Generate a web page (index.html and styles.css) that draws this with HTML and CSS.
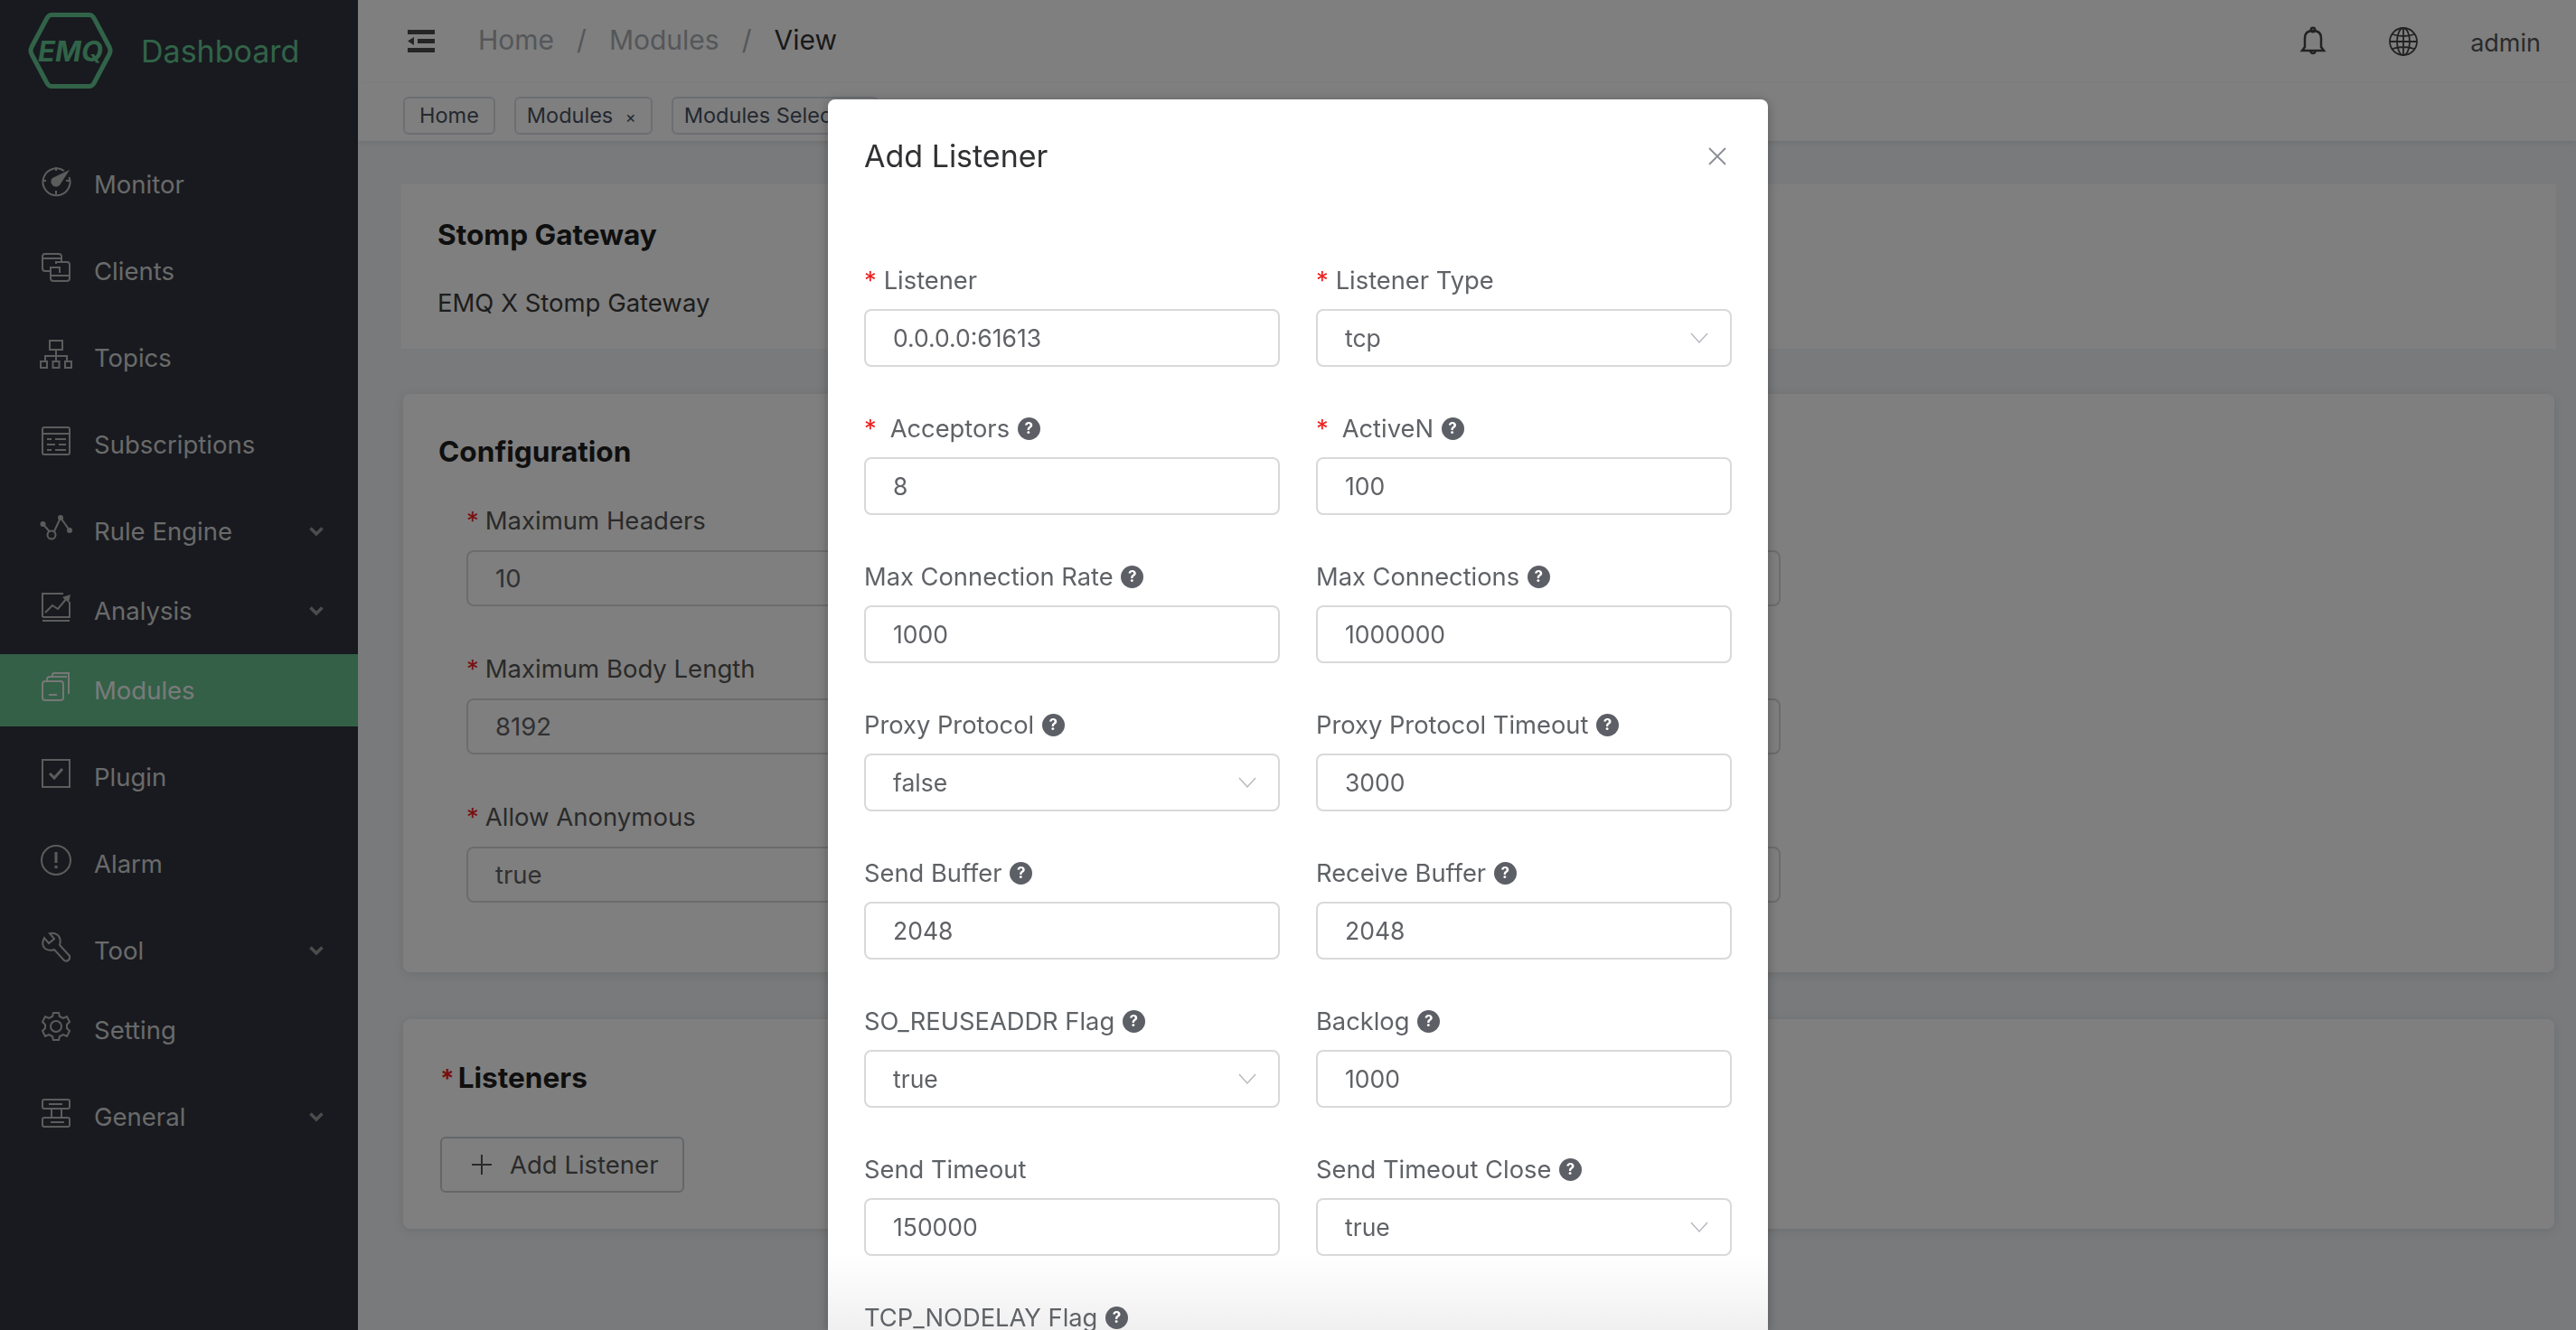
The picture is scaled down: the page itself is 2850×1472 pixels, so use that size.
FILE: index.html
```html
<!DOCTYPE html>
<html lang="en">
<head>
  <meta charset="UTF-8">
  <title>Dashboard</title>
  <link rel="stylesheet" href="styles.css">
</head>
<body>

<div class="app">
  <aside class="sidebar">
    <div class="logo">
      <div class="logo-mark">
        <svg class="logo-hex" viewBox="0 0 92 84"><path d="M25 2.5H67Q70 2.5 72 6L89 38Q91 42 89 46L72 78Q70 81.500 67 81.500H25Q22 81.500 20 78L3 46Q1 42 3 38L20 6Q22 2.500 25 2.500Z"/></svg>
        <span class="logo-emq">EMQ</span>
      </div>
      <span class="logo-name">Dashboard</span>
    </div>

    <nav class="nav">
      <a class="nav-item">
        <svg class="nav-icon" viewBox="0 0 32 32"><path d="M25 5A15 15 0 1 0 30.500 12"/><path d="M16 1V5M16 27V31M1 16H5M27 16H31"/><path class="solid" d="M31 4L20 21A5.500 5.500 0 1 1 12 13Z"/></svg>
        <span>Monitor</span>
      </a>
      <a class="nav-item">
        <svg class="nav-icon" viewBox="0 0 32 32"><path d="M10 20H4Q1 20 1 17V4Q1 1 4 1H19Q22 1 22 4V10M1 6H22"/><path d="M16 12V10H28Q31 10 31 13V28Q31 31 28 31H13Q10 31 10 28V16H20V22M10 25H31"/></svg>
        <span>Clients</span>
      </a>
      <a class="nav-item">
        <svg class="nav-icon" viewBox="0 0 32 32"><path d="M9 1H23V11H9ZM16 11V18M4 24V18H28V24M16 18V24M-1 24H6V31H-1ZM12.500 24H19.500V31H12.500ZM26 24H33V31H26Z"/></svg>
        <span>Topics</span>
      </a>
      <a class="nav-item">
        <svg class="nav-icon" viewBox="0 0 32 32"><path d="M3 1H29Q31 1 31 3V29Q31 31 29 31H3Q1 31 1 29V3Q1 1 3 1Z"/><path d="M1 8H31M6 14H11M15 14H27M6 20H15M19 20H27M6 26H11M15 26H27"/></svg>
        <span>Subscriptions</span>
      </a>
      <a class="nav-item nav-sub">
        <svg class="nav-icon" viewBox="0 0 32 32"><path d="M1.500 12L8.500 20M14 20L21 5L31 19"/><circle cx="11" cy="24" r="4.500"/><circle class="solid" cx="1.500" cy="12" r="3"/><circle class="solid" cx="21" cy="5" r="3"/><circle class="solid" cx="31" cy="19" r="3"/></svg>
        <span>Rule Engine</span>
        <svg class="chevron" viewBox="0 0 16 10"><path d="M1.500 1.500L8 8L14.500 1.500"/></svg>
      </a>
      <a class="nav-item nav-sub">
        <svg class="nav-icon" viewBox="0 0 32 32"><path d="M1 27V1H24M31 10V27H1M1 31H31"/><path d="M4 22L12 14L18 18L28 6"/><path class="solid" d="M32 2L30 11L23 5Z"/></svg>
        <span>Analysis</span>
        <svg class="chevron" viewBox="0 0 16 10"><path d="M1.500 1.500L8 8L14.500 1.500"/></svg>
      </a>
      <a class="nav-item active">
        <svg class="nav-icon" viewBox="0 0 32 32"><path d="M4 10H21Q24 10 24 13V28Q24 31 21 31H4Q1 31 1 28V13Q1 10 4 10Z"/><path d="M8 25H17M6 9V8Q6 5 9 5H28M12 4V3Q12 1 14 1H30V24"/></svg>
        <span>Modules</span>
      </a>
      <a class="nav-item">
        <svg class="nav-icon" viewBox="0 0 32 32"><path d="M1 1H31V31H1Z"/><path class="thick" d="M9 16L14 21L23 11"/></svg>
        <span>Plugin</span>
      </a>
      <a class="nav-item">
        <svg class="nav-icon" viewBox="0 0 32 32"><circle cx="16" cy="16" r="16"/><path class="thick" d="M16 7V19M16 22V25"/></svg>
        <span>Alarm</span>
      </a>
      <a class="nav-item nav-sub">
        <svg class="nav-icon" viewBox="0 0 32 32"><path d="M9 1L14 7L8 12L3 6Q-1 14 4 18Q9 21 14 19L25 31Q29 33 31 29L31 26L20 14Q22 7 18 3Q14 0 9 1Z"/></svg>
        <span>Tool</span>
        <svg class="chevron" viewBox="0 0 16 10"><path d="M1.500 1.500L8 8L14.500 1.500"/></svg>
      </a>
      <a class="nav-item">
        <svg class="nav-icon" viewBox="0 0 32 32"><circle cx="16" cy="16" r="6"/><path d="M13 1H19L20 5L24 7L28 5L31 11L28 14V18L31 21L28 27L24 25L20 27L19 31H13L12 27L8 25L4 27L1 21L4 18V14L1 11L4 5L8 7L12 5Z"/></svg>
        <span>Setting</span>
      </a>
      <a class="nav-item nav-sub">
        <svg class="nav-icon" viewBox="0 0 32 32"><path d="M3 1H29Q31 1 31 3V9Q31 11 29 11H3Q1 11 1 9V3Q1 1 3 1ZM3 21H29Q31 21 31 23V29Q31 31 29 31H3Q1 31 1 29V23Q1 21 3 21ZM11 11V21M22 11V21M8 6H23M10 26H25"/></svg>
        <span>General</span>
        <svg class="chevron" viewBox="0 0 16 10"><path d="M1.500 1.500L8 8L14.500 1.500"/></svg>
      </a>
    </nav>
  </aside>

  <main class="main">
    <header class="topbar">
      <svg class="fold-icon" viewBox="0 0 30 25"><path d="M0 0H30V5H0ZM0 20H30V25H0ZM11 10H30V15H11ZM0 12.500L7 8V17Z"/></svg>
      <div class="crumbs">
        <span>Home</span><i>/</i><span>Modules</span><i>/</i><span class="crumb-current">View</span>
      </div>
      <div class="topbar-right">
        <svg class="bell" viewBox="0 0 26 32"><path d="M1 26H25L22 22V12Q22 4 13 4Q4 4 4 12V22Z"/><circle cx="13" cy="3" r="2.200"/><path d="M10 27Q13 31 16 27"/></svg>
        <svg class="globe" viewBox="0 0 32 32"><circle cx="16" cy="16" r="15"/><ellipse cx="16" cy="16" rx="7" ry="15"/><path d="M16 1V31M1 16H31M4 8Q16 12 28 8M4 24Q16 20 28 24"/></svg>
        <span class="user">admin</span>
      </div>
    </header>
    <div class="tabs">
      <span class="tag">Home</span>
      <span class="tag">Modules <b>×</b></span>
      <span class="tag">Modules Select <b>×</b></span>
    </div>

    <section class="info-card">
      <h2>Stomp Gateway</h2>
      <p>EMQ X Stomp Gateway</p>
    </section>

    <section class="card config-card">
      <h2>Configuration</h2>
      <div class="config-grid">
        <div class="config-field">
          <label><em>*</em>Maximum Headers</label>
          <input type="text" value="10">
        </div>
        <div class="config-field">
          <label><em>*</em>Maximum Header Length</label>
          <input type="text">
        </div>
        <div class="config-field">
          <label><em>*</em>Maximum Body Length</label>
          <input type="text" value="8192">
        </div>
        <div class="config-field">
          <label><em>*</em>Default User</label>
          <input type="text">
        </div>
        <div class="config-field">
          <label><em>*</em>Allow Anonymous</label>
          <input type="text" value="true">
        </div>
        <div class="config-field">
          <label><em>*</em>Default Password</label>
          <input type="text">
        </div>
      </div>
    </section>

    <section class="card listeners-card">
      <h2><em>*</em>Listeners</h2>
      <button class="add-btn" type="button">
        <svg viewBox="0 0 22 22"><path d="M11 0V22M0 11H22"/></svg>
        Add Listener
      </button>
    </section>
  </main>
</div>

<div class="mask"></div>

<div class="modal">
  <div class="modal-head">
    <span class="modal-title">Add Listener</span>
    <svg class="modal-close" viewBox="0 0 20 20"><path d="M1 1L19 19M19 1L1 19"/></svg>
  </div>

  <form class="modal-form">
    <div class="field">
      <label><em>*</em>Listener</label>
      <input type="text" value="0.0.0.0:61613">
    </div>
    <div class="field">
      <label><em>*</em>Listener Type</label>
      <div class="select">tcp <svg viewBox="0 0 20 12"><path d="M1 1L10 11L19 1"/></svg></div>
    </div>

    <div class="field">
      <label><em class="wide">*</em>Acceptors <span class="help">?</span></label>
      <input type="text" value="8">
    </div>
    <div class="field">
      <label><em class="wide">*</em>ActiveN <span class="help">?</span></label>
      <input type="text" value="100">
    </div>

    <div class="field">
      <label>Max Connection Rate <span class="help">?</span></label>
      <input type="text" value="1000">
    </div>
    <div class="field">
      <label>Max Connections <span class="help">?</span></label>
      <input type="text" value="1000000">
    </div>

    <div class="field">
      <label>Proxy Protocol <span class="help">?</span></label>
      <div class="select">false <svg viewBox="0 0 20 12"><path d="M1 1L10 11L19 1"/></svg></div>
    </div>
    <div class="field">
      <label>Proxy Protocol Timeout <span class="help">?</span></label>
      <input type="text" value="3000">
    </div>

    <div class="field">
      <label>Send Buffer <span class="help">?</span></label>
      <input type="text" value="2048">
    </div>
    <div class="field">
      <label>Receive Buffer <span class="help">?</span></label>
      <input type="text" value="2048">
    </div>

    <div class="field">
      <label>SO_REUSEADDR Flag <span class="help">?</span></label>
      <div class="select">true <svg viewBox="0 0 20 12"><path d="M1 1L10 11L19 1"/></svg></div>
    </div>
    <div class="field">
      <label>Backlog <span class="help">?</span></label>
      <input type="text" value="1000">
    </div>

    <div class="field">
      <label>Send Timeout</label>
      <input type="text" value="150000">
    </div>
    <div class="field">
      <label>Send Timeout Close <span class="help">?</span></label>
      <div class="select">true <svg viewBox="0 0 20 12"><path d="M1 1L10 11L19 1"/></svg></div>
    </div>

    <div class="field">
      <label>TCP_NODELAY Flag <span class="help">?</span></label>
    </div>
  </form>
</div>

</body>
</html>
```

FILE: styles.css
```css
* {
  box-sizing: border-box;
}
html, body {
  height: 100%;
}
body {
  margin: 0;
  overflow: hidden;
  font-family: Inter, "Noto Sans", sans-serif;
  font-size: 27.5px;
  color: #333;
  background: #f2f4f8;
}
em {
  font-style: normal;
  color: #f01f1f;
}
svg {
  display: block;
  flex: none;
  fill: none;
  stroke: currentColor;
  overflow: visible;
}

.app {
  display: flex;
  height: 100%;
}

/* sidebar */
.sidebar {
  width: 396px;
  flex: none;
  background: #30343e;
  color: #d4d4d4;
}
.logo {
  display: flex;
  align-items: center;
  height: 112px;
  padding-left: 32px;
}
.logo-mark {
  position: relative;
  width: 92px;
  height: 84px;
  color: #62c690;
}
.logo-hex {
  width: 92px;
  height: 84px;
  stroke-width: 5;
}
.logo-emq {
  position: absolute;
  inset: 0;
  display: flex;
  align-items: center;
  justify-content: center;
  font-size: 31px;
  font-weight: 700;
  font-style: italic;
}
.logo-name {
  margin-left: 32px;
  font-size: 34px;
  color: #62c690;
}
.nav {
  padding-top: 52px;
}
.nav-item {
  display: flex;
  align-items: center;
  height: 80px;
  margin-bottom: 16px;
  padding-left: 46px;
}
.nav-sub {
  margin-bottom: 8px;
}
.nav-item.active {
  background: #66c08e;
  color: #f5f5f5;
}
.nav-icon {
  width: 32px;
  height: 32px;
  margin-right: 26px;
  margin-bottom: 8px;
  stroke-width: 2;
  color: #b8b8b8;
}
.active .nav-icon {
  color: #eee;
}
.nav-icon .solid {
  fill: currentColor;
  stroke: none;
}
.nav-icon .thick {
  stroke-width: 3;
}
.chevron {
  width: 16px;
  height: 10px;
  margin-left: auto;
  margin-right: 38px;
  stroke-width: 3.500;
  color: #999;
}

/* top bar */
.main {
  flex: 1;
  min-width: 0;
}
.topbar {
  display: flex;
  align-items: center;
  height: 92px;
  padding-left: 55px;
  background: #fff;
}
.fold-icon {
  width: 30px;
  height: 25px;
  margin-bottom: 2px;
  fill: #4a4a4a;
  stroke: none;
}
.crumbs {
  display: flex;
  align-items: center;
  margin-left: 48px;
  margin-bottom: 4px;
  font-size: 30px;
  color: #a8aeb4;
}
.crumbs i {
  margin: 0 25px;
  font-style: normal;
  font-weight: 400;
}
.crumb-current {
  color: #333;
}
.topbar-right {
  display: flex;
  align-items: center;
  margin-left: auto;
  padding-right: 39px;
  color: #555;
}
.bell {
  width: 26px;
  height: 32px;
  stroke-width: 2.500;
  color: #444;
}
.globe {
  width: 32px;
  height: 32px;
  margin-left: 71px;
  stroke-width: 1.800;
  color: #444;
}
.user {
  margin-left: 58px;
  margin-top: 4px;
  font-size: 27px;
  line-height: 32px;
}
.tabs {
  display: flex;
  align-items: flex-start;
  gap: 21px;
  height: 64px;
  padding: 15px 0 0 50px;
  background: #fff;
  box-shadow: 0 2px 6px rgba(0,0,0,0.08);
  position: relative;
}
.tag {
  display: block;
  height: 42px;
  padding: 0 16px;
  border: 2px solid #d8dce5;
  border-radius: 6px;
  font-size: 23.500px;
  line-height: 38px;
  color: #495060;
  background: #fff;
  white-space: nowrap;
}
.tag + .tag {
  padding-left: 12px;
}
.tag b {
  margin-left: 7px;
  font-weight: 400;
  font-size: 18px;
}

/* cards */
h2 {
  margin: 0;
  font-size: 31.600px;
  line-height: 40px;
  font-weight: 700;
  color: #1f1f1f;
}
.info-card {
  height: 182px;
  margin: 48px 22px 50px 48px;
  padding: 36px 40px 0;
  background: #fff;
}
.info-card p {
  margin: 35px 0 0;
  line-height: 40px;
  color: #3a3a3a;
}
.card {
  margin: 0 24px 0 50px;
  background: #fff;
  border-radius: 8px;
  box-shadow: 0 2px 12px rgba(0,0,0,0.1);
}
.config-card {
  height: 640px;
  margin-bottom: 52px;
  padding: 44px 39px 0;
}
.config-grid {
  display: grid;
  grid-template-columns: 1fr 1fr;
  column-gap: 40px;
  width: 1454px;
  margin: 36px 0 0 31px;
}
.config-field {
  height: 164px;
}
.config-field label {
  display: block;
  line-height: 40px;
  margin-bottom: 13px;
  color: #555;
}
.config-field em {
  margin-right: 7px;
}
input {
  display: block;
  width: 100%;
  padding: 0 30px;
  font: inherit;
  color: #606266;
  background: #fff;
  border: 2px solid #d9d9d9;
  border-radius: 8px;
  outline: none;
}
.config-field input {
  height: 62px;
}
.listeners-card {
  height: 232px;
  padding: 45px 41px 0;
}
.listeners-card em {
  margin-right: 4px;
  font-size: 28px;
}
.add-btn {
  display: flex;
  align-items: center;
  height: 62px;
  width: 270px;
  margin-top: 44px;
  padding: 0 0 0 33px;
  border: 2px solid #c9ccd2;
  border-radius: 6px;
  background: #fff;
  font: inherit;
  color: #555;
}
.add-btn svg {
  width: 22px;
  height: 22px;
  margin-right: 20px;
  stroke-width: 2;
}

/* dialog */
.mask {
  position: fixed;
  inset: 0;
  background: rgba(0,0,0,0.5);
}
.modal {
  position: absolute;
  left: 916px;
  top: 110px;
  bottom: 0;
  width: 1040px;
  padding: 0 40px;
  overflow: hidden;
  background: linear-gradient(#fff calc(100% - 84px), #f0f0f0);
  border-radius: 8px 8px 0 0;
  box-shadow: 0 2px 12px rgba(0,0,0,0.3);
}
.modal-head {
  display: flex;
  align-items: center;
  justify-content: space-between;
  height: 88px;
  padding-top: 38px;
  margin-bottom: 92px;
}
.modal-title {
  font-size: 34px;
  line-height: 50px;
  color: #303133;
}
.modal-close {
  width: 20px;
  height: 20px;
  margin-right: 6px;
  stroke-width: 1.800;
  color: #8a8d94;
}
.modal-form {
  display: grid;
  grid-template-columns: 460px 460px;
  column-gap: 40px;
}
.field {
  height: 164px;
}
.field label {
  display: flex;
  align-items: center;
  height: 40px;
  margin-bottom: 12px;
  font-size: 27.300px;
  color: #5f6266;
  white-space: pre;
}
.field em {
  margin-right: 8px;
}
.field em.wide {
  margin-right: 15px;
}
.help {
  display: inline-block;
  width: 25px;
  height: 25px;
  margin-left: 1px;
  border-radius: 50%;
  background: #5d5f66;
  color: #fff;
  font-size: 17px;
  font-weight: 700;
  line-height: 25px;
  text-align: center;
}
.field input,
.select {
  height: 64px;
  font-size: 26.500px;
}
.select {
  display: flex;
  align-items: center;
  justify-content: space-between;
  padding: 0 24px 0 30px;
  color: #606266;
  background: #fff;
  border: 2px solid #d9d9d9;
  border-radius: 8px;
}
.select svg {
  width: 20px;
  height: 12px;
  stroke-width: 1.500;
  color: #b6b9bf;
}
```
